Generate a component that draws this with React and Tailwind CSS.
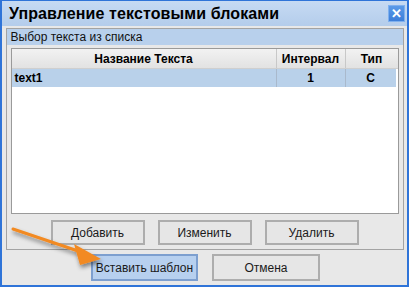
import React from 'react';

const font = { fontFamily: '"Liberation Sans", Arial, sans-serif' };

function Btn({ children, active, w }) {
  return (
    <div
      className={`flex items-center justify-center text-[12px] text-[#1a1a1a] border-2 ${
        active ? 'bg-[#b7d0ef] border-[#7d9fcf]' : 'bg-[#e6e6e6] border-[#adadad]'
      } ${w}`}
    >
      {children}
    </div>
  );
}

export default function App() {
  return (
    <div className="relative w-[409px] h-[287px] overflow-hidden" style={font}>
      <div className="flex flex-col w-full h-full bg-[#e8e8e8] border-x-2 border-b-2 border-t border-[#2f74d8]">
        {/* title bar */}
        <div className="flex items-center justify-between h-[25px] shrink-0 pl-[7px] pr-[2px] bg-gradient-to-b from-[#c6daf3] to-[#b4cdeb]">
          <span className="text-[16px] font-bold text-black tracking-[0.1px]">Управление текстовыми блоками</span>
          <div className="flex items-center justify-center w-[17px] h-[17px] bg-gradient-to-b from-[#5a9ae8] to-[#3c7ed9] border border-[#7fb0ee] text-white font-bold text-[13px] leading-none">
            ✕
          </div>
        </div>

        {/* body */}
        <div className="flex flex-col items-center pt-[2px]">
          <div className="flex flex-col w-[398px] border border-[#a3a3a3] pb-[4px]">
            <div className="h-[16px] bg-[#b8d0ec] pl-[4px] text-[12px] leading-[16px] text-[#111]">
              Выбор текста из списка
            </div>
            <div className="mx-[4px] mt-[3px] h-[166px] bg-white border border-[#9a9a9a] flex flex-col">
              <div className="flex h-[20px] bg-gradient-to-b from-[#f2f2f2] to-[#e2e2e2] border-b border-[#cfcfcf] text-[12px] font-bold text-black">
                <div className="w-[265px] flex items-center justify-center border-r border-[#c8c8c8]">Название Текста</div>
                <div className="w-[69px] flex items-center justify-center border-r border-[#c8c8c8]">Интервал</div>
                <div className="flex-1 flex items-center justify-center">Тип</div>
              </div>
              <div className="flex h-[18px] w-[384px] bg-[#b9d1ea] text-[12px] font-bold text-black">
                <div className="w-[265px] flex items-center pl-[3px] border-r border-[#a9b9cc]">text1</div>
                <div className="w-[69px] flex items-center justify-center border-r border-[#a9b9cc]">1</div>
                <div className="flex-1 flex items-center justify-center">С</div>
              </div>
            </div>
            <div className="flex justify-center gap-[13px] mt-[6px]">
              <Btn w="w-[94px] h-[25px]">Добавить</Btn>
              <Btn w="w-[94px] h-[25px]">Изменить</Btn>
              <Btn w="w-[94px] h-[25px]">Удалить</Btn>
            </div>
          </div>
          <div className="flex justify-center gap-[14px] mt-[4px] pl-[2px]">
            <Btn active w="w-[107px] h-[27px]">Вставить шаблон</Btn>
            <Btn w="w-[108px] h-[27px]">Отмена</Btn>
          </div>
        </div>
      </div>

      {/* annotation arrows */}
      <svg className="absolute left-0 top-0 pointer-events-none" width="409" height="287">
        <defs>
          <filter id="sh" x="-10%" y="-100%" width="120%" height="400%">
            <feDropShadow dx="1" dy="3" stdDeviation="2" floodColor="#000" floodOpacity="0.45" />
          </filter>
        </defs>
        <line x1="14" y1="87" x2="383" y2="87" stroke="#f28a22" strokeWidth="3" strokeLinecap="round" filter="url(#sh)" />
        <g filter="url(#sh)">
          <line x1="13" y1="229" x2="84" y2="253" stroke="#f28a22" strokeWidth="3" strokeLinecap="round" />
          <polygon points="101,259 74,244 80,265" fill="#f28a22" />
        </g>
      </svg>
    </div>
  );
}
